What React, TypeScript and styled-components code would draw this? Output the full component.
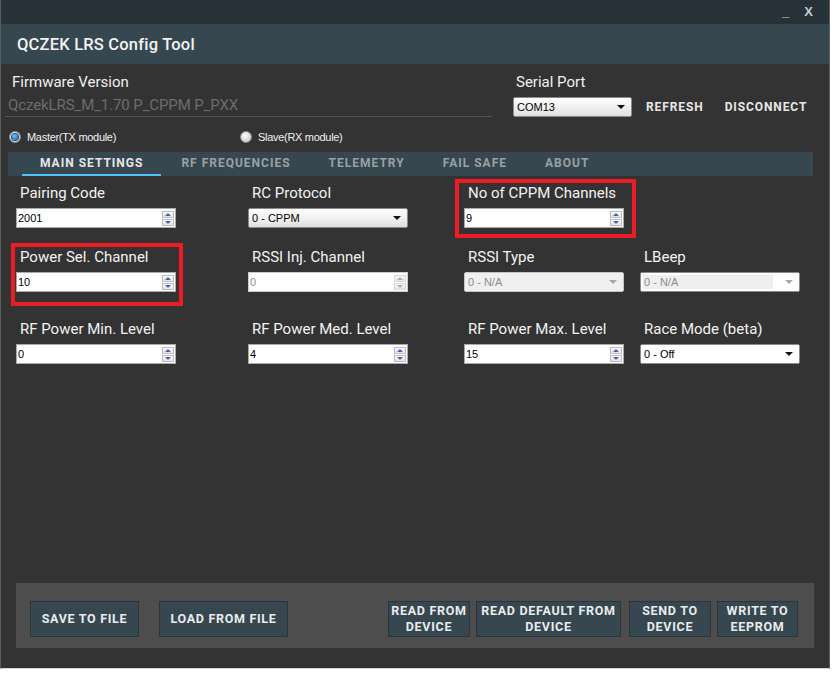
import React from "react";
import styled, { createGlobalStyle } from "styled-components";

const GlobalStyle = createGlobalStyle`
  html, body {
    margin: 0;
    padding: 0;
    background: #ffffff;
    font-family: Roboto, "Liberation Sans", sans-serif;
  }
`;

const Window = styled.div`
  width: 830px;
  height: 669px;
  box-sizing: border-box;
  display: flex;
  flex-direction: column;
  background: #333333;
  border-left: 1px solid #5c5c5c;
  border-right: 1px solid #5c5c5c;
  border-bottom: 1px solid #c9d9ea;
`;

const TitleBar = styled.div`
  height: 24px;
  flex: none;
  background: #263238;
  display: flex;
  justify-content: flex-end;
  align-items: center;
  padding-right: 16px;
  gap: 15px;
`;

const WinControl = styled.span`
  font-family: "Liberation Sans", sans-serif;
  font-weight: 700;
  font-size: 13px;
  line-height: 14px;
  color: #c5cdd1;
`;

const Header = styled.div`
  height: 40px;
  flex: none;
  background: #37474f;
  display: flex;
  align-items: center;
  padding-left: 16px;
`;

const Title = styled.h1`
  margin: 0;
  font-size: 16.5px;
  font-weight: 500;
  color: #f2f2f2;
  letter-spacing: 0.2px;
`;

const Body = styled.div`
  flex: 1;
  display: flex;
  flex-direction: column;
`;

const TopRow = styled.div`
  display: flex;
  padding: 9px 0 0 4px;
`;

const FirmwareCol = styled.div`
  width: 487px;
`;

const SectionLabel = styled.div<{ $indent: number }>`
  font-size: 15px;
  line-height: 18px;
  color: #f0f0f0;
  padding-left: ${(p) => p.$indent}px;
`;

const FirmwareValue = styled.div`
  margin-top: 5px;
  padding: 0 0 2px 3px;
  font-size: 15px;
  line-height: 18px;
  color: #6c6c6c;
  letter-spacing: -0.1px;
  border-bottom: 1px solid #545454;
`;

const SerialCol = styled.div`
  margin-left: 21px;
`;

const SerialControls = styled.div`
  display: flex;
  align-items: center;
  margin-top: 6px;
`;

const LinkButton = styled.span<{ $gap: number }>`
  margin-left: ${(p) => p.$gap}px;
  font-size: 12px;
  font-weight: 700;
  letter-spacing: 0.9px;
  color: #e8e8e8;
`;

const RadioRow = styled.div`
  display: flex;
  align-items: center;
  height: 16px;
  margin-top: 12px;
  padding-left: 8px;
`;

const RadioItem = styled.label<{ $width?: number }>`
  display: flex;
  align-items: center;
  gap: 6px;
  width: ${(p) => (p.$width ? `${p.$width}px` : "auto")};
  font-family: "Liberation Sans", sans-serif;
  font-size: 11px;
  letter-spacing: -0.3px;
  color: #f0f0f0;
`;

const RadioDot = styled.span<{ $checked?: boolean }>`
  width: 12px;
  height: 12px;
  box-sizing: border-box;
  border-radius: 50%;
  border: 1px solid #8d8d8d;
  background: radial-gradient(circle at 40% 35%, #ffffff, #cfcfcf 70%);
  display: flex;
  align-items: center;
  justify-content: center;
  &::after {
    content: "";
    display: ${(p) => (p.$checked ? "block" : "none")};
    width: 6px;
    height: 6px;
    border-radius: 50%;
    background: radial-gradient(circle at 40% 35%, #6ec3ff, #0f6fc6 75%);
    box-shadow: 0 0 0 1px #174f86;
  }
`;

const TabBar = styled.div`
  height: 24px;
  margin: 7px 16px 0 7px;
  background: #37474f;
  display: flex;
  padding-left: 14px;
`;

const Tab = styled.div<{ $active?: boolean }>`
  padding: 0 18px;
  box-sizing: border-box;
  height: 24px;
  line-height: 23px;
  font-size: 12px;
  font-weight: 700;
  letter-spacing: 1px;
  color: ${(p) => (p.$active ? "#e6e6e6" : "#9aa0a3")};
  border-bottom: 2px solid ${(p) => (p.$active ? "#4fc3f7" : "transparent")};
  margin-right: 2px;
`;

const FieldGrid = styled.div`
  display: grid;
  grid-template-columns: 232px 216px 176px 176px;
  grid-template-rows: 64px 72px auto;
  margin: 9px 0 0 15px;
`;

type Inset = { top: number; right: number; bottom: number; left: number };

const Field = styled.div<{ $box?: Inset }>`
  position: relative;
  width: 160px;
  align-self: start;
  &::before {
    content: "";
    display: ${(p) => (p.$box ? "block" : "none")};
    position: absolute;
    top: ${(p) => p.$box?.top ?? 0}px;
    right: ${(p) => p.$box?.right ?? 0}px;
    bottom: ${(p) => p.$box?.bottom ?? 0}px;
    left: ${(p) => p.$box?.left ?? 0}px;
    border: 4px solid #ec1c24;
    pointer-events: none;
  }
`;

const FieldLabel = styled.div`
  font-size: 15px;
  line-height: 17px;
  color: #f2f2f2;
  padding-left: 4px;
  margin-bottom: 6px;
  white-space: nowrap;
`;

const InputBox = styled.div<{ $disabled?: boolean }>`
  width: 160px;
  height: 20px;
  box-sizing: border-box;
  border: 1px solid ${(p) => (p.$disabled ? "#cbcbcb" : "#a9a9a9")};
  background: #ffffff;
  display: flex;
  align-items: center;
`;

const ControlText = styled.span<{ $disabled?: boolean }>`
  flex: 1;
  padding-left: 1px;
  font-family: "Liberation Sans", sans-serif;
  font-size: 11px;
  color: ${(p) => (p.$disabled ? "#8c8c8c" : "#000000")};
`;

const SpinButtons = styled.div`
  display: flex;
  flex-direction: column;
  gap: 1px;
  margin-right: 1px;
`;

const SpinHalf = styled.div<{ $disabled?: boolean }>`
  width: 12px;
  height: 7px;
  box-sizing: border-box;
  border: 1px solid ${(p) => (p.$disabled ? "#d6d6d6" : "#bcbcbc")};
  background: linear-gradient(#fafafa, #e4e4e4);
  display: flex;
  align-items: center;
  justify-content: center;
`;

const Tri = styled.span<{ $down?: boolean; $disabled?: boolean }>`
  width: 0;
  height: 0;
  border-left: 3px solid transparent;
  border-right: 3px solid transparent;
  ${(p) =>
    p.$down
      ? `border-top: 3px solid ${p.$disabled ? "#b0b0b0" : "#4a5fc0"};`
      : `border-bottom: 3px solid ${p.$disabled ? "#b0b0b0" : "#4a5fc0"};`}
`;

const SelectBox = styled.div<{ $width?: number; $disabled?: boolean; $flat?: boolean }>`
  width: ${(p) => p.$width ?? 160}px;
  height: 20px;
  box-sizing: border-box;
  border: 1px solid ${(p) => (p.$disabled ? "#c6c6c6" : "#8a8a8a")};
  border-radius: 2px;
  background: ${(p) =>
    p.$disabled
      ? "#f0f0f0"
      : p.$flat
      ? "#ffffff"
      : "linear-gradient(#ffffff 0%, #f1f1f1 50%, #dedede 100%)"};
  display: flex;
  align-items: center;
  padding: 2px 6px 2px 2px;
`;

const SelectInner = styled.div<{ $shaded?: boolean }>`
  flex: 1;
  height: 100%;
  display: flex;
  align-items: center;
  background: ${(p) => (p.$shaded ? "#efefef" : "transparent")};
  margin-right: ${(p) => (p.$shaded ? "12px" : "0")};
`;

const Arrow = styled.span<{ $disabled?: boolean }>`
  width: 0;
  height: 0;
  border-left: 4px solid transparent;
  border-right: 4px solid transparent;
  border-top: 4px solid ${(p) => (p.$disabled ? "#a8a8a8" : "#111111")};
`;

const ActionPanel = styled.div`
  margin: auto 15px 20px 15px;
  height: 65px;
  box-sizing: border-box;
  background: #4d4d4d;
  display: flex;
  padding: 18px 16px 11px 14px;
`;

const ActionButton = styled.div<{ $width: number; $gap?: number; $push?: boolean }>`
  width: ${(p) => p.$width}px;
  margin-left: ${(p) => (p.$push ? "auto" : `${p.$gap ?? 0}px`)};
  box-sizing: border-box;
  background: #37474f;
  border: 1px solid #2a363c;
  color: #e9ecee;
  font-size: 12.5px;
  font-weight: 700;
  letter-spacing: 0.7px;
  line-height: 16px;
  text-align: center;
  display: flex;
  align-items: center;
  justify-content: center;
`;

const SpinInput: React.FC<{ value: string; disabled?: boolean }> = ({
  value,
  disabled,
}) => (
  <InputBox $disabled={disabled}>
    <ControlText $disabled={disabled}>{value}</ControlText>
    <SpinButtons>
      <SpinHalf $disabled={disabled}>
        <Tri $disabled={disabled} />
      </SpinHalf>
      <SpinHalf $disabled={disabled}>
        <Tri $down $disabled={disabled} />
      </SpinHalf>
    </SpinButtons>
  </InputBox>
);

const Select: React.FC<{
  value: string;
  width?: number;
  disabled?: boolean;
  shaded?: boolean;
  flat?: boolean;
}> = ({ value, width, disabled, shaded, flat }) => (
  <SelectBox $width={width} $disabled={disabled && !shaded} $flat={flat || shaded}>
    <SelectInner $shaded={shaded}>
      <ControlText $disabled={disabled}>{value}</ControlText>
    </SelectInner>
    <Arrow $disabled={disabled} />
  </SelectBox>
);

const tabs = ["MAIN SETTINGS", "RF FREQUENCIES", "TELEMETRY", "FAIL SAFE", "ABOUT"];

const App: React.FC = () => {
  return (
    <>
      <GlobalStyle />
      <Window>
        <TitleBar>
          <WinControl>_</WinControl>
          <WinControl>X</WinControl>
        </TitleBar>
        <Header>
          <Title>QCZEK LRS Config Tool</Title>
        </Header>
        <Body>
          <TopRow>
            <FirmwareCol>
              <SectionLabel $indent={7}>Firmware Version</SectionLabel>
              <FirmwareValue>QczekLRS_M_1.70 P_CPPM P_PXX</FirmwareValue>
            </FirmwareCol>
            <SerialCol>
              <SectionLabel $indent={3}>Serial Port</SectionLabel>
              <SerialControls>
                <Select value="COM13" width={119} />
                <LinkButton $gap={14}>REFRESH</LinkButton>
                <LinkButton $gap={21}>DISCONNECT</LinkButton>
              </SerialControls>
            </SerialCol>
          </TopRow>

          <RadioRow>
            <RadioItem $width={231}>
              <RadioDot $checked />
              Master(TX module)
            </RadioItem>
            <RadioItem>
              <RadioDot />
              Slave(RX module)
            </RadioItem>
          </RadioRow>

          <TabBar>
            {tabs.map((t, i) => (
              <Tab key={t} $active={i === 0}>
                {t}
              </Tab>
            ))}
          </TabBar>

          <FieldGrid>
            <Field>
              <FieldLabel>Pairing Code</FieldLabel>
              <SpinInput value="2001" />
            </Field>
            <Field>
              <FieldLabel>RC Protocol</FieldLabel>
              <Select value="0 - CPPM" />
            </Field>
            <Field $box={{ top: -6, right: -12, bottom: -10, left: -9 }}>
              <FieldLabel>No of CPPM Channels</FieldLabel>
              <SpinInput value="9" />
            </Field>
            <div />

            <Field $box={{ top: -6, right: -7, bottom: -14, left: -5 }}>
              <FieldLabel>Power Sel. Channel</FieldLabel>
              <SpinInput value="10" />
            </Field>
            <Field>
              <FieldLabel>RSSI Inj. Channel</FieldLabel>
              <SpinInput value="0" disabled />
            </Field>
            <Field>
              <FieldLabel>RSSI Type</FieldLabel>
              <Select value="0 - N/A" disabled />
            </Field>
            <Field>
              <FieldLabel>LBeep</FieldLabel>
              <Select value="0 - N/A" disabled shaded />
            </Field>

            <Field>
              <FieldLabel>RF Power Min. Level</FieldLabel>
              <SpinInput value="0" />
            </Field>
            <Field>
              <FieldLabel>RF Power Med. Level</FieldLabel>
              <SpinInput value="4" />
            </Field>
            <Field>
              <FieldLabel>RF Power Max. Level</FieldLabel>
              <SpinInput value="15" />
            </Field>
            <Field>
              <FieldLabel>Race Mode (beta)</FieldLabel>
              <Select value="0 - Off" flat />
            </Field>
          </FieldGrid>

          <ActionPanel>
            <ActionButton $width={109}>SAVE TO FILE</ActionButton>
            <ActionButton $width={129} $gap={20}>
              LOAD FROM FILE
            </ActionButton>
            <ActionButton $width={82} $push>
              READ FROM
              <br />
              DEVICE
            </ActionButton>
            <ActionButton $width={145} $gap={6}>
              READ DEFAULT FROM
              <br />
              DEVICE
            </ActionButton>
            <ActionButton $width={82} $gap={8}>
              SEND TO
              <br />
              DEVICE
            </ActionButton>
            <ActionButton $width={81} $gap={6}>
              WRITE TO
              <br />
              EEPROM
            </ActionButton>
          </ActionPanel>
        </Body>
      </Window>
    </>
  );
};

export default App;
